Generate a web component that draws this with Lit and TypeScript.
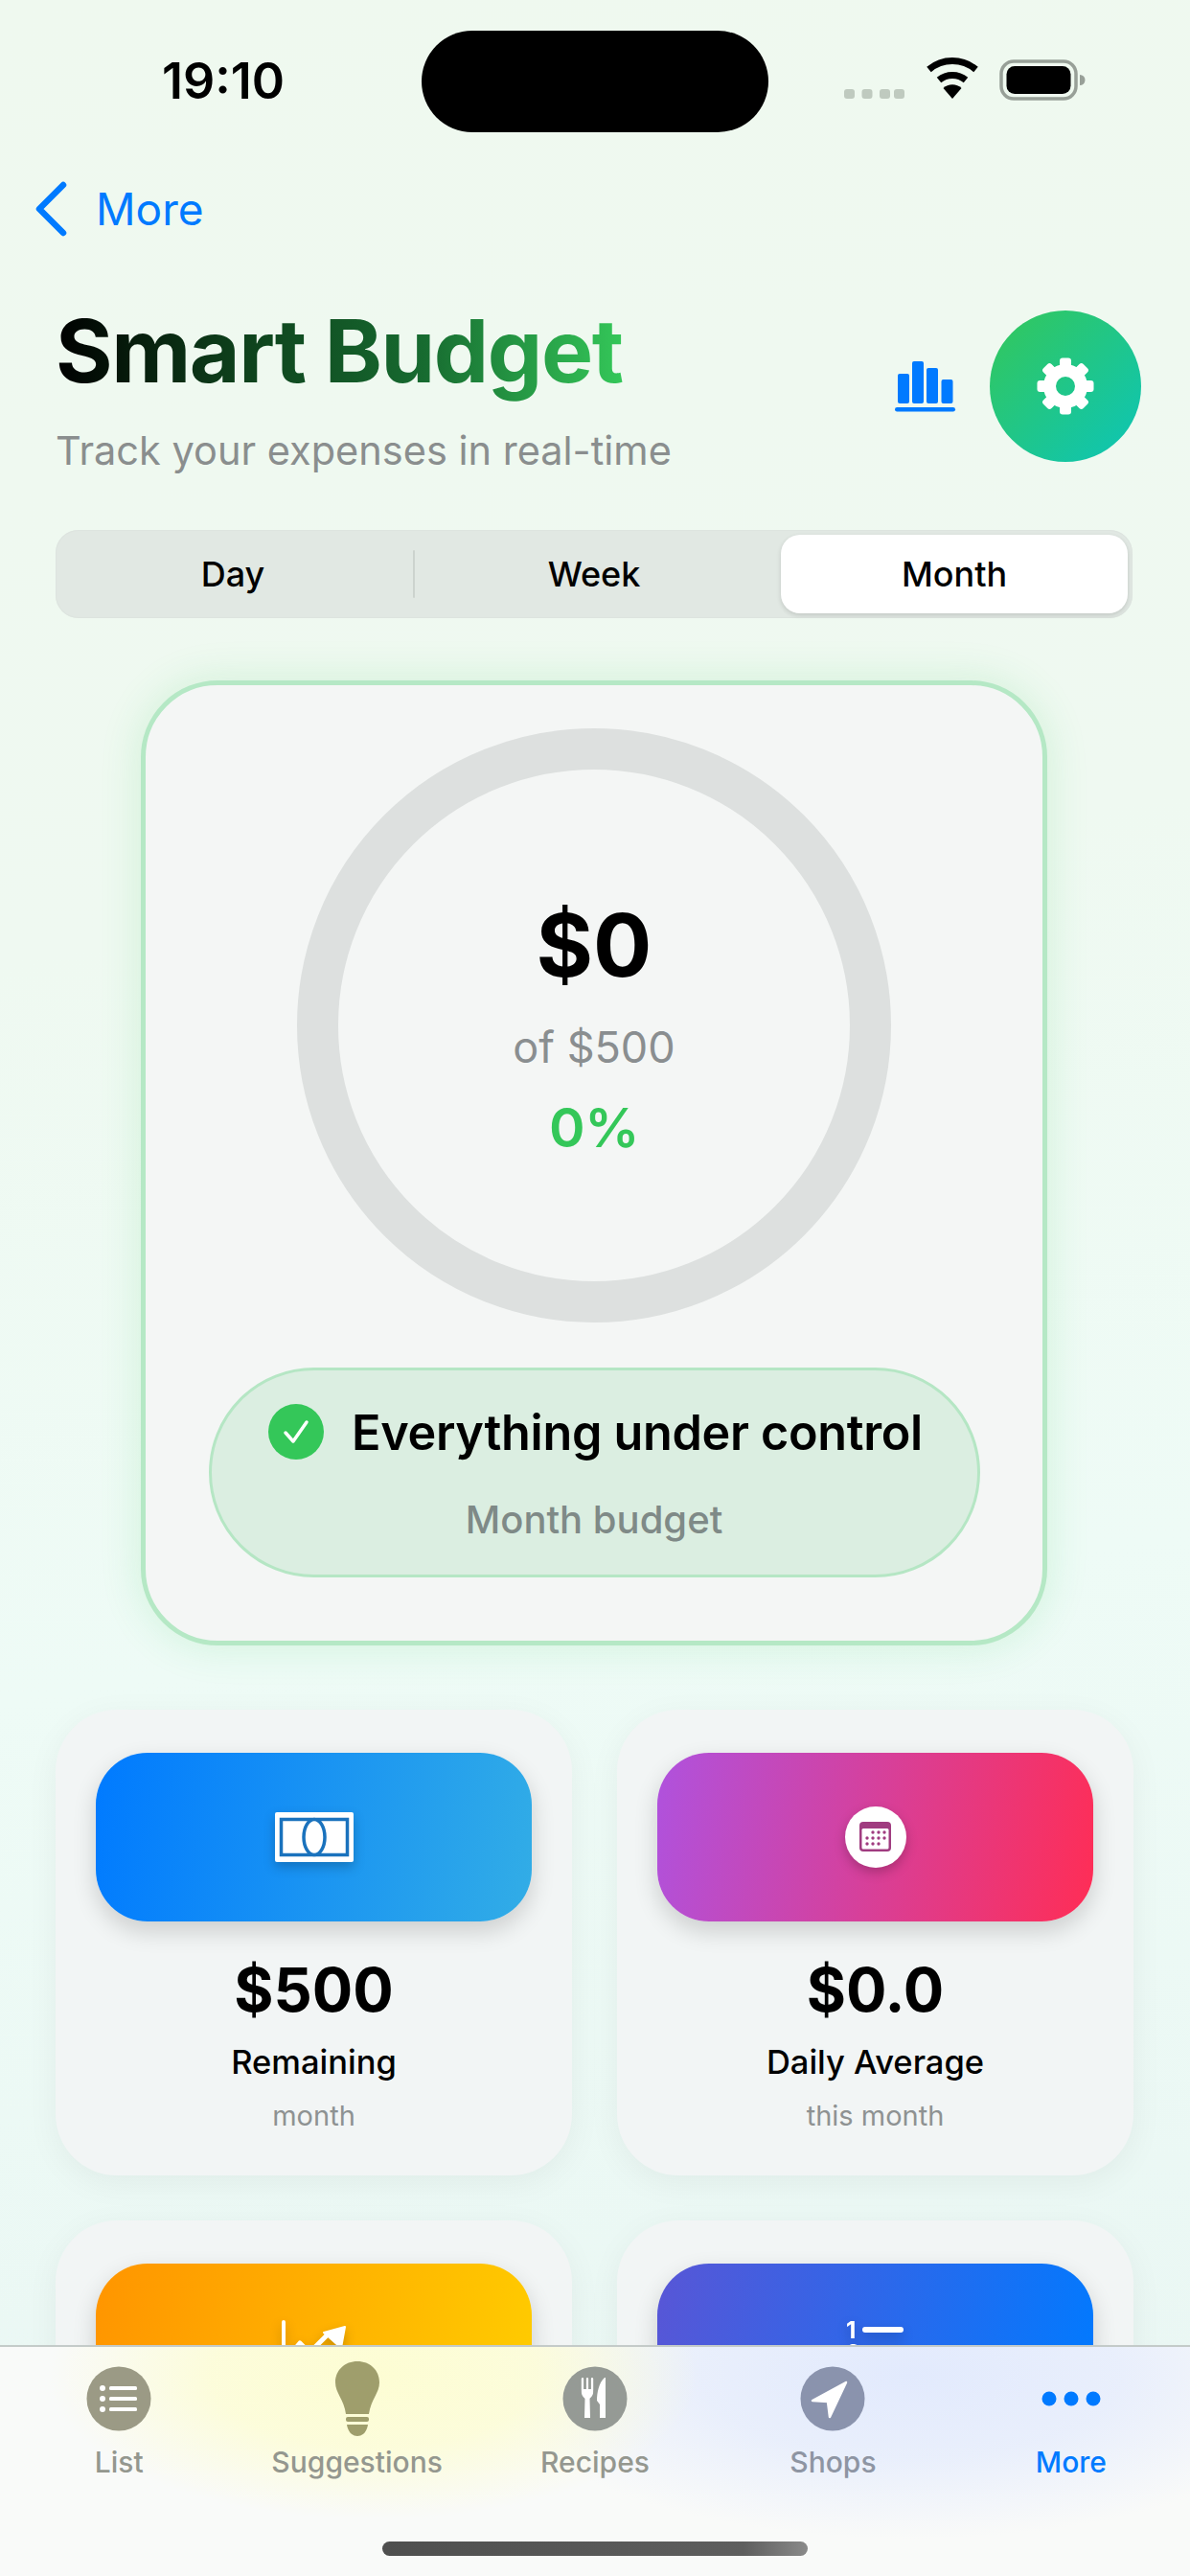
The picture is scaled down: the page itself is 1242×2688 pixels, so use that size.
import { LitElement, html, css, svg } from "lit";
import { customElement } from "lit/decorators.js";

const gearTeeth = [0, 45, 90, 135, 180, 225, 270, 315];

const gear = html`<svg class="gear" viewBox="-31 -31 62 62">
  <circle r="16.5" fill="none" stroke="#fff" stroke-width="13"></circle>
  ${gearTeeth.map((a) => svg`<rect x="-6" y="-29.500" width="12" height="11" rx="3" fill="#fff" transform="rotate(${a})"></rect>`)}
</svg>`;

@customElement("app-root")
export class AppRoot extends LitElement {
  static styles = css`
    :host {
      display: block;
      position: relative;
      width: 1242px;
      height: 2688px;
      overflow: hidden;
      font-family: Inter, "Liberation Sans", sans-serif;
      color: #000;
      background: linear-gradient(172deg, #eff9ef 0%, #eff9f1 35%, #eefbf6 62%, #e9f6f3 100%);
    }
    * { box-sizing: border-box; }
    svg { display: block; }

    .status { height: 150px; position: relative; display: flex; align-items: flex-start; }
    .time { position: absolute; left: 169px; top: 54px; font-size: 52px; line-height: 62px; font-weight: 600; letter-spacing: 0; }
    .island { position: absolute; left: 440px; top: 32px; width: 362px; height: 106px; border-radius: 53px; background: #000; }
    .status-icons { position: absolute; left: 881px; top: 60px; }

    .nav { height: 136px; padding-left: 34px; display: flex; align-items: center; gap: 28px; color: #007aff; font-size: 46px; }

    .header { height: 160px; margin-top: 38px; padding: 0 51px 0 58px; display: flex; align-items: flex-start; justify-content: space-between; }
    h1 { margin: 0; font-size: 91px; line-height: 84px; padding-bottom: 16px; font-weight: 700; letter-spacing: -1.4px; background: linear-gradient(90deg, #000 0%, #0d3d1a 30%, #176b30 65%, #34c759 100%); -webkit-background-clip: text; background-clip: text; color: transparent; width: max-content; }
    .sub { margin-top: 21px; font-size: 41.5px; line-height: 50px; color: #8a8e8e; }
    .actions { display: flex; align-items: center; gap: 35px; }
    .gear-btn { width: 158px; height: 158px; border-radius: 50%; background: linear-gradient(135deg, #34c759, #0cc5b8); display: flex; align-items: center; justify-content: center; }
    .gear { width: 62px; height: 62px; }

    .seg { margin: 69px 60px 0 58px; height: 92px; border-radius: 24px; background: #e1e8e3; padding: 5px; display: flex; box-shadow: inset 0 0 0 1px #dde4df; }
    .seg div { display: flex; align-items: center; justify-content: center; font-size: 36px; font-weight: 500; border-radius: 20px; position: relative; }
    .seg .d { width: 368px; padding-right: 8px; }
    .seg .w { width: 382px; padding-right: 8px; }
    .seg .on { flex: 1; background: #fff; box-shadow: 0 2px 5px rgba(0,0,0,.14); }
    .seg .div { border-right: 2px solid #ccd3ce; width: 0; height: 50px; align-self: center; }

    .hero { margin: 65px 0 0 147px; width: 946px; height: 1007px; padding: 45px 0 0; border: 5px solid #b5e8c5; border-radius: 80px; background: #f4f6f5; box-shadow: 0 0 44px rgba(52,199,89,.16); display: flex; flex-direction: column; align-items: center; }
    .ring { width: 620px; height: 620px; padding-top: 7px; border-radius: 50%; border: 43px solid #dde0df; display: flex; flex-direction: column; align-items: center; justify-content: center; }
    .amt { font-size: 91px; line-height: 100px; font-weight: 700; }
    .of { font-size: 45px; line-height: 56px; color: #8a8e90; margin-top: 29px; }
    .pct { font-size: 57px; line-height: 70px; font-weight: 600; color: #34c759; margin-top: 21px; letter-spacing: -.5px; }
    .pill { margin-top: 47px; width: 805px; height: 219px; border-radius: 110px; border: 3px solid #b5e6c4; background: #dbeee1; display: flex; flex-direction: column; align-items: center; padding-top: 34px; }
    .pill-top { display: flex; align-items: center; gap: 29px; height: 60px; padding-left: 3px; }
    .pill-top b { font-size: 50.3px; font-weight: 600; letter-spacing: -.3px; }
    .pill small { font-size: 40px; line-height: 50px; margin-top: 37px; font-weight: 500; color: #7f8a87; }

    .grid { margin: 67px 59px 0 58px; display: grid; grid-template-columns: 1fr 1fr; gap: 47px; }
    .card { height: 486px; border-radius: 64px; background: #f2f5f5; box-shadow: 0 8px 34px rgba(0,0,0,.05); padding: 45px 42px 0; display: flex; flex-direction: column; align-items: center; }
    .tile { width: 100%; height: 176px; flex: none; border-radius: 54px; display: flex; align-items: center; justify-content: center; box-shadow: 0 10px 24px rgba(0,0,0,.16); }
    .t1 { background: linear-gradient(100deg, #007aff, #32ade6); }
    .t2 { background: linear-gradient(100deg, #af52de, #ff2d55); }
    .t3 { background: linear-gradient(100deg, #ff9500, #ffcc00); }
    .t4 { background: linear-gradient(100deg, #5856d6, #007aff); }
    .tile svg { filter: drop-shadow(0 5px 6px rgba(0,0,0,.22)); }
    .val { margin-top: 38px; font-size: 63px; line-height: 66px; font-weight: 700; }
    .lab { margin-top: 21px; font-size: 34.5px; line-height: 44px; font-weight: 500; }
    .note { margin-top: 16px; font-size: 29px; line-height: 36px; color: #8e9292; }

    .tabbar { position: absolute; left: 0; right: 0; top: 2447px; bottom: 0; border-top: 2px solid #c4cbc9; padding-top: 15px;
      background:
        radial-gradient(ellipse 340px 150px at 390px 30px, #fdfdd3 0%, rgba(253,253,211,.8) 50%, rgba(253,253,211,0) 100%),
        radial-gradient(ellipse 440px 170px at 950px 30px, #e2eafd 0%, rgba(226,234,253,.7) 50%, rgba(226,234,253,0) 100%),
        #f9faf9; }
    .tabs { display: flex; }
    .tab { flex: 1; display: flex; flex-direction: column; align-items: center; font-size: 30px; font-weight: 500; line-height: 40px; color: #94978f; }
    .tab .ic { height: 77px; display: flex; align-items: center; justify-content: center; margin-bottom: 8px; }
    .tab.on { color: #007aff; }
    .tab.blue { color: #8e95a3; }
    .home { position: absolute; left: 399px; top: 203px; width: 444px; height: 15px; border-radius: 8px; background: linear-gradient(90deg, #4f4f4f, #5e5e5e 85%, #8a8a8a); }
  `;

  render() {
    return html`
      <div class="status">
        <div class="time">19:10</div>
        <div class="island"></div>
        <svg class="status-icons" width="254" height="50" viewBox="0 0 254 50">
          <g fill="#bfcabf">
            <rect x="0" y="33" width="11" height="10" rx="3"></rect>
            <rect x="18.500" y="33" width="11" height="10" rx="3"></rect>
            <rect x="37" y="33" width="11" height="10" rx="3"></rect>
            <rect x="52" y="33" width="11" height="10" rx="3"></rect>
          </g>
          <g fill="none" stroke="#000" stroke-width="7">
            <path d="M88.500 12.500 A38 38 0 0 1 137.500 12.500"></path>
            <path d="M99 23.500 A22 22 0 0 1 127 23.500"></path>
          </g>
          <path d="M103.500 32 A14 14 0 0 1 122.500 32 L113 43 Z" fill="#000"></path>
          <rect x="164" y="4" width="78" height="39" rx="13" fill="none" stroke="#98a098" stroke-width="3.500"></rect>
          <rect x="169.500" y="9" width="67" height="29" rx="8.500" fill="#000"></rect>
          <path d="M246 18 a5.500 5.500 0 0 1 0 11 Z" fill="#98a098"></path>
        </svg>
      </div>

      <div class="nav">
        <svg width="38" height="60" viewBox="0 0 38 60"><path d="M32 5 L7 30 L32 55" fill="none" stroke="#007aff" stroke-width="6.500" stroke-linecap="round" stroke-linejoin="round"></path></svg>
        <span>More</span>
      </div>

      <div class="header">
        <div>
          <h1>Smart Budget</h1>
          <div class="sub">Track your expenses in real-time</div>
        </div>
        <div class="actions">
          <svg width="64" height="54" viewBox="0 0 64 54">
            <g fill="#007aff">
              <rect x="3" y="14" width="12" height="31" rx="2"></rect>
              <rect x="18" y="1" width="12" height="44" rx="2"></rect>
              <rect x="33" y="8" width="12" height="37" rx="2"></rect>
              <rect x="48.500" y="20" width="12" height="25" rx="2"></rect>
              <rect x="0" y="49" width="63" height="4.500" rx="2.250"></rect>
            </g>
          </svg>
          <div class="gear-btn">${gear}</div>
        </div>
      </div>

      <div class="seg">
        <div class="d">Day</div><div class="div"></div><div class="w">Week</div><div class="on">Month</div>
      </div>

      <div class="hero">
        <div class="ring">
          <div class="amt">$0</div>
          <div class="of">of $500</div>
          <div class="pct">0%</div>
        </div>
        <div class="pill">
          <div class="pill-top">
            <svg width="58" height="58" viewBox="0 0 58 58"><circle cx="29" cy="29" r="29" fill="#34c759"></circle><path d="M18 30 L26 39 L40 19" fill="none" stroke="#fff" stroke-width="3.500" stroke-linecap="round" stroke-linejoin="round"></path></svg>
            <b>Everything under control</b>
          </div>
          <small>Month budget</small>
        </div>
      </div>

      <div class="grid">
        <div class="card">
          <div class="tile t1">
            <svg width="82" height="52" viewBox="0 0 82 52">
              <rect width="82" height="52" rx="2" fill="#fff"></rect>
              <rect x="6.500" y="7.500" width="69" height="37" fill="none" stroke="#1a72bd" stroke-width="3.500"></rect>
              <ellipse cx="41" cy="26" rx="11" ry="18.500" fill="#fff" stroke="#1a72bd" stroke-width="3.500"></ellipse>
            </svg>
          </div>
          <div class="val">$500</div>
          <div class="lab">Remaining</div>
          <div class="note">month</div>
        </div>
        <div class="card">
          <div class="tile t2">
            <svg width="64" height="64" viewBox="0 0 64 64">
              <circle cx="32" cy="32" r="32" fill="#fff"></circle>
              <rect x="15" y="16" width="33" height="31" rx="4" fill="#a03c80"></rect>
              <rect x="17.500" y="23" width="28" height="21.500" rx="1.500" fill="#fff"></rect>
              <g fill="#a03c80">
                <circle cx="29" cy="27" r="1.700"></circle><circle cx="35" cy="27" r="1.700"></circle><circle cx="41" cy="27" r="1.700"></circle>
                <circle cx="23" cy="33" r="1.700"></circle><circle cx="29" cy="33" r="1.700"></circle><circle cx="35" cy="33" r="1.700"></circle><circle cx="41" cy="33" r="1.700"></circle>
                <circle cx="23" cy="39" r="1.700"></circle><circle cx="29" cy="39" r="1.700"></circle><circle cx="35" cy="39" r="1.700"></circle>
              </g>
            </svg>
          </div>
          <div class="val">$0.0</div>
          <div class="lab">Daily Average</div>
          <div class="note">this month</div>
        </div>
        <div class="card">
          <div class="tile t3">
            <svg width="76" height="60" viewBox="0 0 76 60">
              <path d="M6 3 V57 H74" fill="none" stroke="#fff" stroke-width="4" stroke-linecap="round"></path>
              <path d="M12 38 L23 25 L33 35 L54 14" fill="none" stroke="#fff" stroke-width="5" stroke-linejoin="round"></path>
              <path d="M48 14 L70 8 L66 30 Z" fill="#fff" stroke="#fff" stroke-width="2" stroke-linejoin="round"></path>
            </svg>
          </div>
        </div>
        <div class="card">
          <div class="tile t4">
            <svg width="64" height="60" viewBox="0 0 64 60" fill="#fff" font-family="Inter, sans-serif" font-size="24" font-weight="700">
              <text x="1" y="20">1</text><rect x="18" y="8" width="43" height="6" rx="3"></rect>
              <text x="1" y="44">2</text><rect x="18" y="28" width="43" height="6" rx="3"></rect>
            </svg>
          </div>
        </div>
      </div>

      <div class="tabbar">
        <div class="tabs">
          <div class="tab">
            <div class="ic"><svg width="68" height="68" viewBox="0 0 68 68">
              <circle cx="34" cy="34" r="33.500" fill="#9b9a85"></circle>
              <g fill="#fff">
                <circle cx="17" cy="23" r="3"></circle><circle cx="17" cy="34" r="3"></circle><circle cx="17" cy="45" r="3"></circle>
                <rect x="24" y="21" width="29" height="4" rx="1.500"></rect><rect x="24" y="32" width="29" height="4" rx="1.500"></rect><rect x="24" y="43" width="29" height="4" rx="1.500"></rect>
              </g>
            </svg></div>List
          </div>
          <div class="tab">
            <div class="ic"><svg width="46" height="78" viewBox="0 0 46 78" fill="#9f9e6c">
              <path d="M23 0 C36 0 46 9 46 22 C46 33 37 40 35 55 H11 C9 40 0 33 0 22 C0 9 10 0 23 0 Z"></path>
              <rect x="11" y="58" width="24" height="5" rx="2"></rect>
              <path d="M12 66 H34 C33 73 29 78 23 78 C17 78 13 73 12 66 Z"></path>
            </svg></div>Suggestions
          </div>
          <div class="tab">
            <div class="ic"><svg width="68" height="68" viewBox="0 0 68 68">
              <circle cx="34" cy="34" r="33.500" fill="#959a95"></circle>
              <path d="M21 13 V25 M26 13 V25 M31 13 V25" stroke="#fff" stroke-width="2.200" stroke-linecap="round" fill="none"></path>
              <path d="M19.900 13 V27 C19.900 31 23 33 23.500 34 L23 54 H29 L28.500 34 C29 33 32.100 31 32.100 27 V13 L30 24 H22 Z" fill="#fff"></path>
              <path d="M44 12 C38 17 36 28 36 36 L39 40 V54 H45 V12 Z" fill="#fff"></path>
            </svg></div>Recipes
          </div>
          <div class="tab blue">
            <div class="ic"><svg width="68" height="68" viewBox="0 0 68 68">
              <circle cx="34" cy="34" r="33.500" fill="#8a93ad"></circle>
              <path d="M48 17 L13 36 L29 37 L31 53 Z" fill="#fff" stroke="#fff" stroke-width="2.500" stroke-linejoin="round"></path>
            </svg></div>Shops
          </div>
          <div class="tab on">
            <div class="ic"><svg width="64" height="18" viewBox="0 0 64 18" fill="#007aff">
              <circle cx="9" cy="9" r="7.500"></circle><circle cx="32" cy="9" r="7.500"></circle><circle cx="55" cy="9" r="7.500"></circle>
            </svg></div>More
          </div>
        </div>
        <div class="home"></div>
      </div>
    `;
  }
}
